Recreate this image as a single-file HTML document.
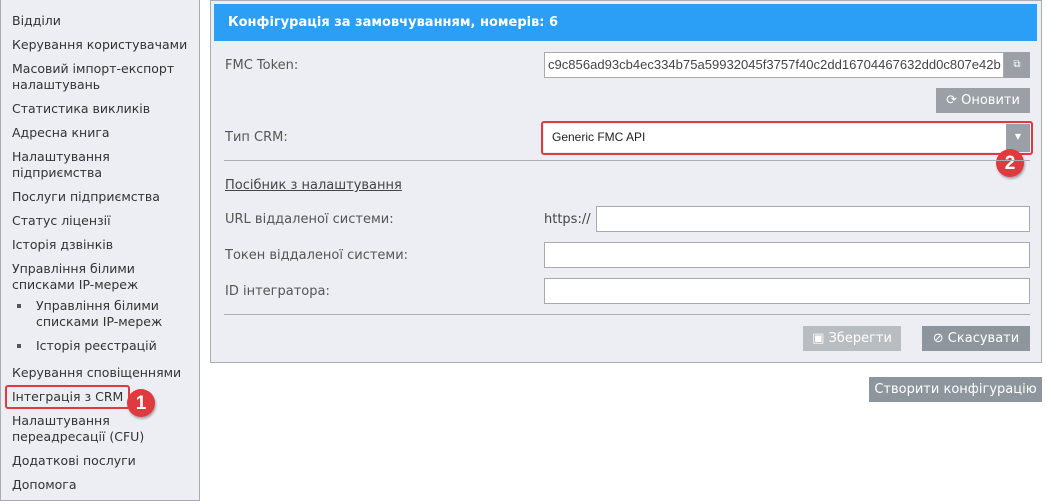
<html><head><style>
body{margin:0;width:1047px;height:504px;background:#fff;font-family:"DejaVu Sans","Liberation Sans",sans-serif;font-size:12.5px;color:#333;position:relative;overflow:hidden}
.a{position:absolute;white-space:nowrap}
#side{position:absolute;left:0;top:0;width:198px;height:500px;background:#eceef3;border:1px solid #a9adb3;border-top:none}
.s{position:absolute;left:11px;line-height:16px;color:#333}
#panel{position:absolute;left:210px;top:0;width:830px;height:361px;background:#eceef3;border:1px solid #a9adb3}
#hdr{position:absolute;left:214px;top:4px;width:823px;height:37px;background:#2a9ff5;color:#fff;font-weight:bold;font-size:13px;line-height:37px;text-indent:14px}
.lbl{position:absolute;left:225px;color:#555;font-size:13px}
.inp{position:absolute;background:#fff;border:1px solid #aaa;box-sizing:border-box}
.btn{position:absolute;color:#fff;font-size:13px;text-align:center;box-sizing:border-box}
.hr{position:absolute;left:224px;width:806px;height:1px;background:#a9adb3}
.badge{position:absolute;width:28px;height:28px;border-radius:50%;background:#e03a3e;color:#fff;font:bold 19px "Liberation Sans",sans-serif;text-align:center;line-height:29px;box-shadow:1px 2px 2px rgba(0,0,0,.3)}
</style></head><body>
<div id="side">
<div class="s" style="top:13px">Відділи</div>
<div class="s" style="top:37px">Керування користувачами</div>
<div class="s" style="top:61px">Масовий імпорт-експорт<br>налаштувань</div>
<div class="s" style="top:101px">Статистика викликів</div>
<div class="s" style="top:125px">Адресна книга</div>
<div class="s" style="top:149px">Налаштування<br>підприємства</div>
<div class="s" style="top:189px">Послуги підприємства</div>
<div class="s" style="top:213px">Статус ліцензії</div>
<div class="s" style="top:237px">Історія дзвінків</div>
<div class="s" style="top:261px">Управління білими<br>списками IP-мереж</div>
<div class="s" style="top:298px;left:35px">Управління білими<br>списками IP-мереж</div>
<div class="a" style="left:16px;top:304px;width:4px;height:4px;background:#555"></div>
<div class="s" style="top:338px;left:35px">Історія реєстрацій</div>
<div class="a" style="left:16px;top:344px;width:4px;height:4px;background:#555"></div>
<div class="s" style="top:365px">Керування сповіщеннями</div>
<div class="s" style="top:389px">Інтеграція з CRM</div>
<div class="a" style="left:4px;top:385px;width:121px;height:20px;border:2px solid #e03a3e;border-radius:3px"></div>
<div class="s" style="top:413px">Налаштування<br>переадресації (CFU)</div>
<div class="s" style="top:453px">Додаткові послуги</div>
<div class="s" style="top:477px">Допомога</div>
</div>
<div class="badge" style="left:127px;top:389px">1</div>
<div id="panel"></div>
<div id="hdr">Конфігурація за замовчуванням, номерів: 6</div>
<div class="lbl" style="top:58px">FMC Token:</div>
<div class="inp" style="left:544px;top:52px;width:460px;height:26px;font:13.05px 'Liberation Sans',sans-serif;color:#444;line-height:24px;padding-left:3px;overflow:hidden">c9c856ad93cb4ec334b75a59932045f3757f40c2dd16704467632dd0c807e42b</div>
<div class="btn" style="left:1004px;top:52px;width:26px;height:26px;background:#9aa0a6;line-height:26px;font-size:10px">⧉</div>
<div class="btn" style="left:936px;top:88px;width:94px;height:25px;background:#9aa0a6;line-height:25px">⟳ Оновити</div>
<div class="lbl" style="top:130px">Тип CRM:</div>
<div class="a" style="left:541px;top:121px;width:488px;height:30px;border:2px solid #e03a3e;border-radius:3px"></div>
<div class="inp" style="left:544px;top:124px;width:462px;height:28px;border:none;font:12px 'Liberation Sans',sans-serif;line-height:26px;padding-left:8px;color:#222">Generic FMC API</div>
<div class="btn" style="left:1006px;top:124px;width:24px;height:28px;background:#9aa0a6;line-height:26px;font-size:8px">▼</div>
<div class="badge" style="left:996px;top:149px">2</div>
<div class="hr" style="top:160px"></div>
<div class="lbl" style="top:178px;text-decoration:underline;color:#444">Посібник з налаштування</div>
<div class="lbl" style="top:212px">URL віддаленої системи:</div>
<div class="a" style="left:544px;top:212px;font-size:13px;color:#444">https://</div>
<div class="inp" style="left:596px;top:206px;width:434px;height:26px"></div>
<div class="lbl" style="top:248px">Токен віддаленої системи:</div>
<div class="inp" style="left:544px;top:242px;width:486px;height:26px"></div>
<div class="lbl" style="top:284px">ID інтегратора:</div>
<div class="inp" style="left:544px;top:278px;width:486px;height:26px"></div>
<div class="hr" style="top:314px"></div>
<div class="btn" style="left:803px;top:326px;width:98px;height:25px;background:#b8bdc2;line-height:25px">▣ Зберегти</div>
<div class="btn" style="left:922px;top:326px;width:108px;height:25px;background:#8e969d;line-height:25px">⊘ Скасувати</div>
<div class="btn" style="left:869px;top:377px;width:173px;height:25px;background:#8e969d;line-height:25px">Створити конфігурацію</div>
</body></html>
